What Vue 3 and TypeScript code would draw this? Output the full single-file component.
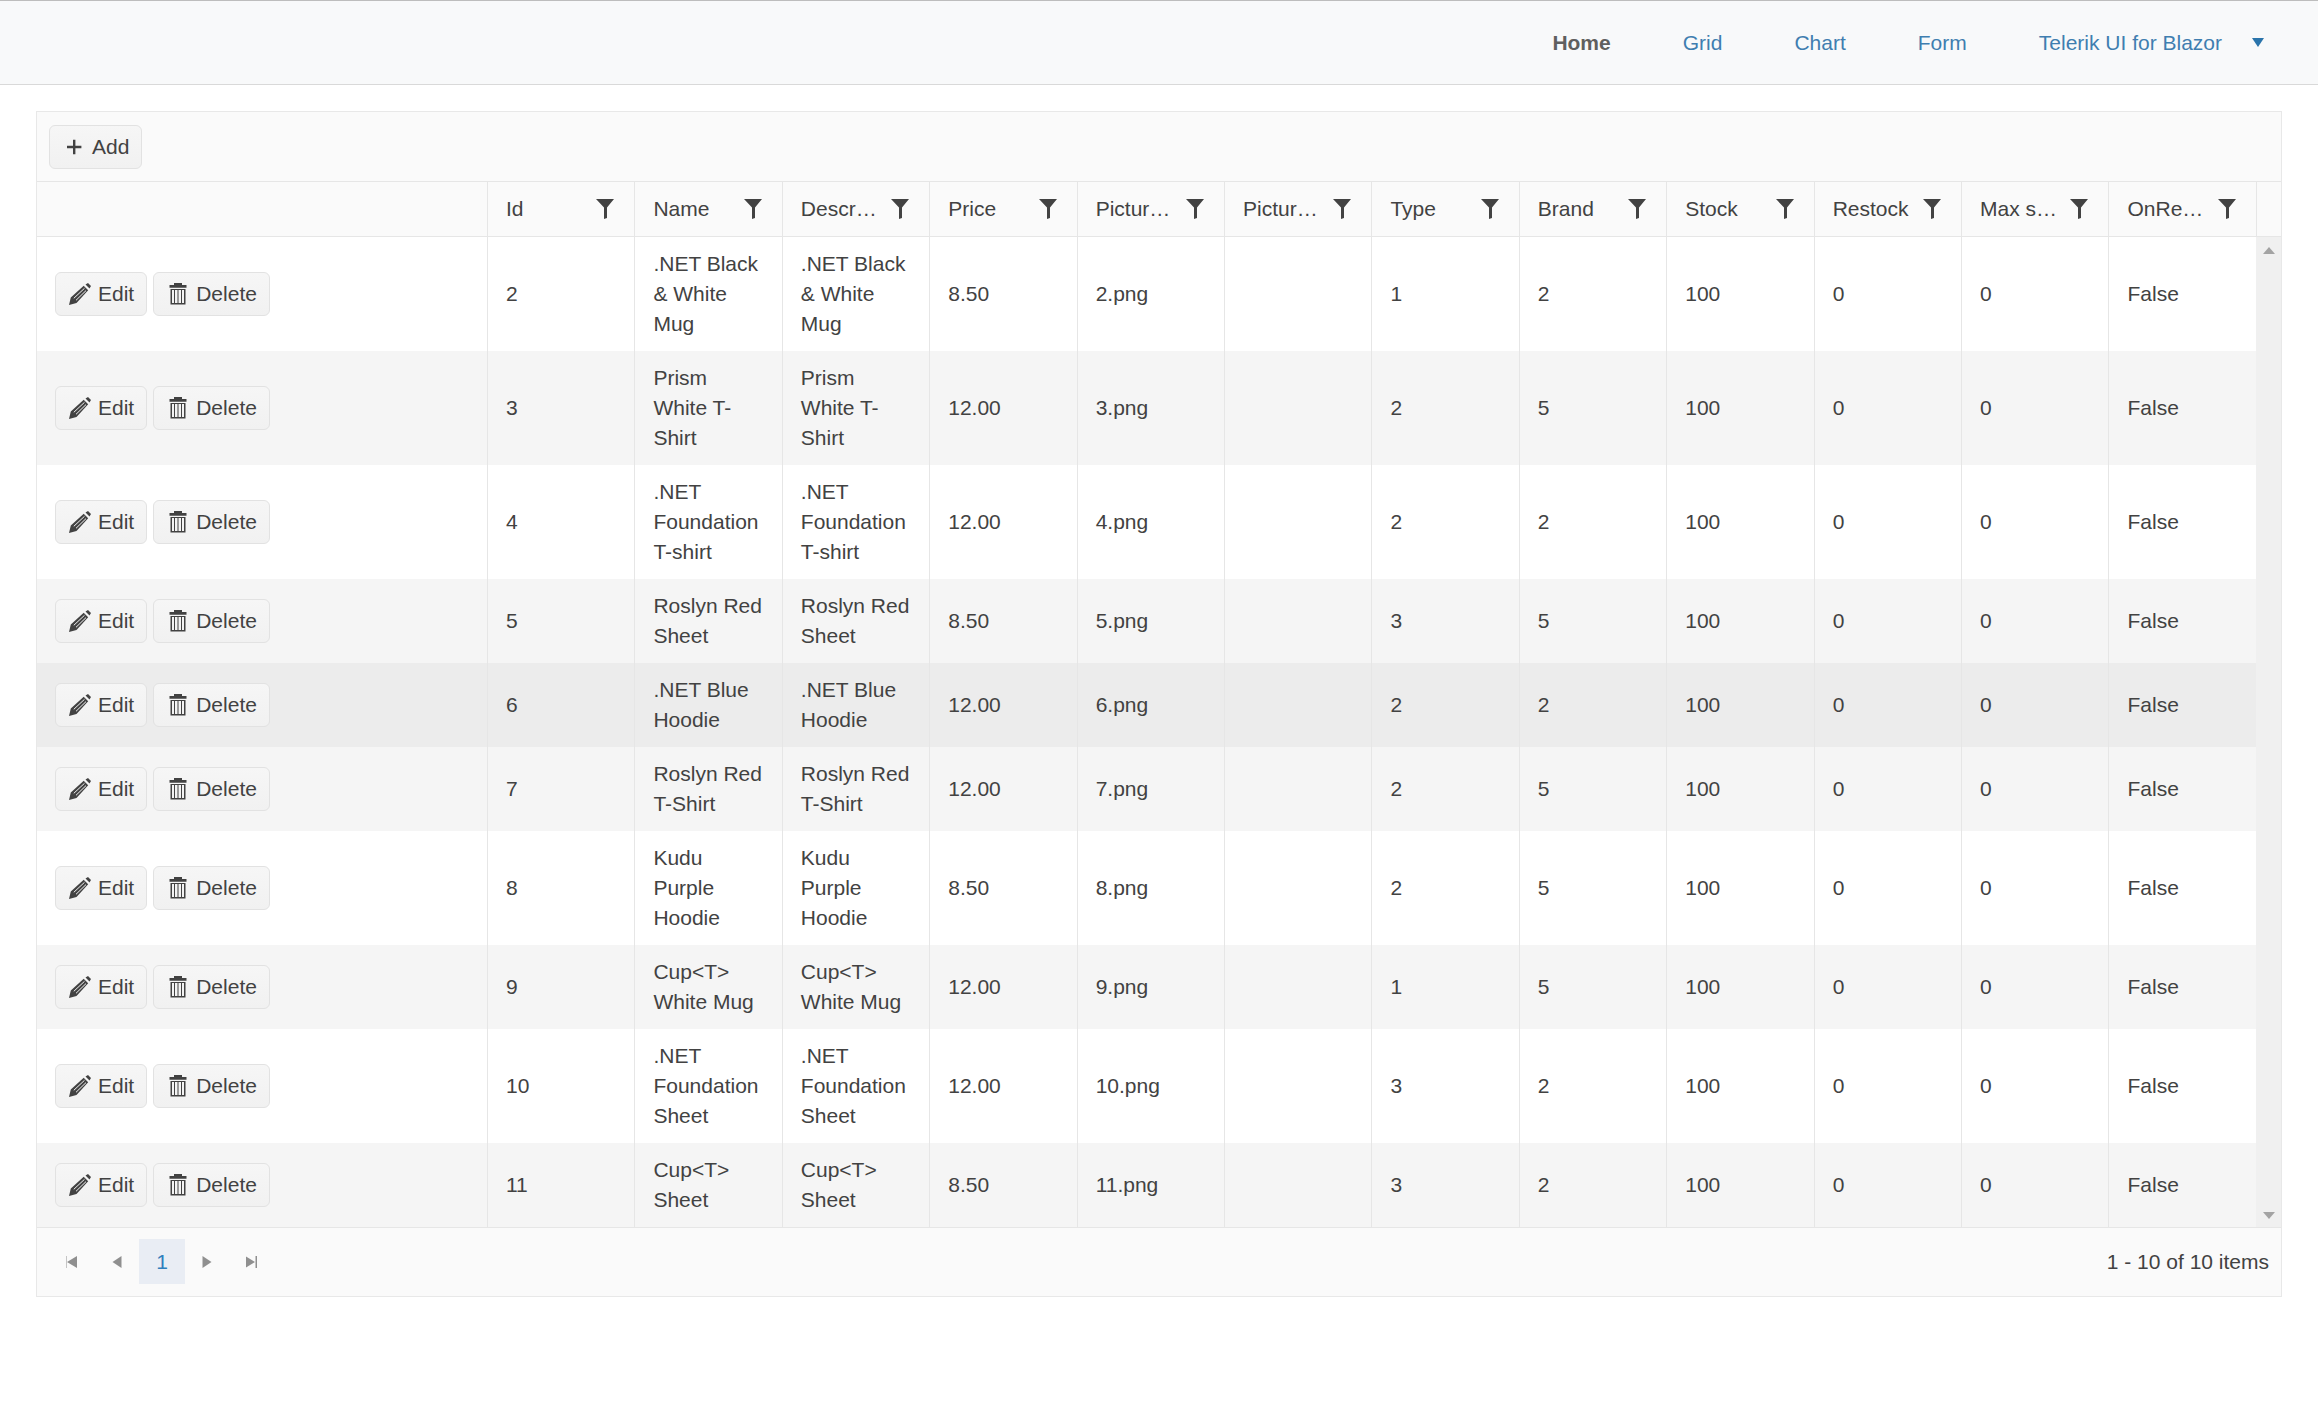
<template>
  <div class="page">
    <nav class="navbar">
      <a class="nav-link active">Home</a>
      <a class="nav-link">Grid</a>
      <a class="nav-link">Chart</a>
      <a class="nav-link">Form</a>
      <a class="nav-link dropdown">
        Telerik UI for Blazor
        <svg class="caret" viewBox="0 0 12 9"><path d="M0 0h12L6 9z" /></svg>
      </a>
    </nav>

    <main class="content">
      <div class="grid">
        <div class="toolbar">
          <button class="btn">
            <span class="btn-icon">
              <svg viewBox="0 0 24 24"><path d="M5 10.800h6v-6h2.400v6h6v2.400h-6v6H11v-6H5z" /></svg>
            </span>Add
          </button>
        </div>

        <div class="grid-head">
          <table class="grid-table">
            <colgroup>
              <col class="col-actions" />
            </colgroup>
            <thead>
              <tr>
                <th></th>
                <th v-for="title in columns" :key="title">
                  <span class="th-title">{{ title }}</span>
                  <svg class="filter" viewBox="0 0 18 20"><path d="M0 0h18l-7 8.500V19l-3 1V8.500z" /></svg>
                </th>
              </tr>
            </thead>
          </table>
          <div class="head-gutter"></div>
        </div>

        <div class="grid-body">
          <table class="grid-table">
            <colgroup>
              <col class="col-actions" />
            </colgroup>
            <tbody>
              <tr v-for="(row, i) in rows" :key="row.id" :class="{ alt: i % 2 === 1, hover: row.id === 6 }">
                <td>
                  <button class="btn">
                    <span class="btn-icon">
                      <svg viewBox="0 0 24 24">
                        <path d="M17.500 2.500L20 1l3 3-1.500 2.500zM2.800 15.500L15.700 3.800l4.500 4.500L8.500 21 1 23z" />
                        <path class="cut" d="M5.800 16.300L16.500 6.300M8 18.300L18 8.600" />
                      </svg>
                    </span>Edit
                  </button>
                  <button class="btn">
                    <span class="btn-icon">
                      <svg viewBox="0 0 24 24">
                        <path d="M8 1h8v2h4.500v2.700h-17V3H8z" />
                        <path d="M4.500 7h15v15.500h-15zM6 8v13h2V8zM9 8v13h2.500V8zM12.500 8v13H15V8zM16 8v13h2V8z" fill-rule="evenodd" />
                      </svg>
                    </span>Delete
                  </button>
                </td>
                <td>{{ row.id }}</td>
                <td>{{ row.name }}</td>
                <td>{{ row.name }}</td>
                <td>{{ row.price }}</td>
                <td>{{ row.id }}.png</td>
                <td></td>
                <td>{{ row.type }}</td>
                <td>{{ row.brand }}</td>
                <td>100</td>
                <td>0</td>
                <td>0</td>
                <td>False</td>
              </tr>
            </tbody>
          </table>
          <div class="scrollbar">
            <svg viewBox="0 0 12 7"><path d="M6 0l6 7H0z" /></svg>
            <svg viewBox="0 0 12 7"><path d="M0 0h12L6 7z" /></svg>
          </div>
        </div>

        <div class="pager">
          <a class="page-btn">
            <svg viewBox="1 0 12 12"><path d="M0 0h1.500v12H0zM12 0v12L2 6z" /></svg>
          </a>
          <a class="page-btn">
            <svg viewBox="0 0 12 12"><path d="M10.500 0v12L1.500 6z" /></svg>
          </a>
          <span class="page-btn selected">1</span>
          <a class="page-btn">
            <svg viewBox="0 0 12 12"><path d="M1.500 0v12l9-6z" /></svg>
          </a>
          <a class="page-btn">
            <svg viewBox="1 0 12 12"><path d="M12 0h-1.500v12H12zM0 0v12l10-6z" /></svg>
          </a>
          <span class="pager-info">1 - 10 of 10 items</span>
        </div>
      </div>
    </main>
  </div>
</template>

<script setup lang="ts">
interface Item {
  id: number;
  name: string;
  price: string;
  type: number;
  brand: number;
}

const columns: string[] = [
  'Id',
  'Name',
  'Description',
  'Price',
  'PictureFileName',
  'PictureUri',
  'Type',
  'Brand',
  'Stock',
  'Restock',
  'Max stock',
  'OnReorder',
];

const rows: Item[] = [
  { id: 2, name: '.NET Black & White Mug', price: '8.50', type: 1, brand: 2 },
  { id: 3, name: 'Prism White T-Shirt', price: '12.00', type: 2, brand: 5 },
  { id: 4, name: '.NET Foundation T-shirt', price: '12.00', type: 2, brand: 2 },
  { id: 5, name: 'Roslyn Red Sheet', price: '8.50', type: 3, brand: 5 },
  { id: 6, name: '.NET Blue Hoodie', price: '12.00', type: 2, brand: 2 },
  { id: 7, name: 'Roslyn Red T-Shirt', price: '12.00', type: 2, brand: 5 },
  { id: 8, name: 'Kudu Purple Hoodie', price: '8.50', type: 2, brand: 5 },
  { id: 9, name: 'Cup<T> White Mug', price: '12.00', type: 1, brand: 5 },
  { id: 10, name: '.NET Foundation Sheet', price: '12.00', type: 3, brand: 2 },
  { id: 11, name: 'Cup<T> Sheet', price: '8.50', type: 3, brand: 2 },
];
</script>

<style>
body {
  background: #fff;
}
</style>

<style scoped>
.page {
  font-family: 'Liberation Sans', Arial, sans-serif;
  font-size: 21px;
  line-height: 30px;
  color: #424242;
}

.navbar {
  display: flex;
  justify-content: flex-end;
  align-items: center;
  height: 83px;
  padding-right: 54px;
  background: #f8f9fa;
  border-top: 1px solid #bdbdbd;
  border-bottom: 1px solid #d9d9d9;
}

.nav-link {
  padding: 0 36px;
  color: #3f7eb0;
}

.nav-link.active {
  font-weight: 700;
  color: #5f5f5f;
}

.nav-link.dropdown {
  padding-right: 0;
  display: flex;
  align-items: center;
}

.caret {
  width: 12px;
  height: 9px;
  margin-left: 30px;
  fill: #2a74ab;
}

.content {
  padding: 26px 36px;
}

.grid {
  border: 1px solid #e8e8e8;
  background: #fafafa;
}

.toolbar {
  padding: 13px 12px 12px;
  border-bottom: 1px solid #e6e6e6;
}

.btn {
  display: inline-flex;
  align-items: center;
  height: 44px;
  padding: 0 12px;
  border: 1px solid #e2e2e2;
  border-radius: 6px;
  background: linear-gradient(#f6f6f6, #f1f1f1);
  font: inherit;
  color: #424242;
}

.btn + .btn {
  margin-left: 6px;
}

.btn-icon {
  width: 24px;
  height: 24px;
  margin-right: 6px;
}

.btn-icon svg {
  display: block;
  width: 24px;
  height: 24px;
  fill: #424242;
}

.cut {
  stroke: #f3f3f3;
  stroke-width: 1;
  fill: none;
}

.grid-head,
.grid-body {
  display: grid;
  grid-template-columns: minmax(0, 1fr) 25px;
}

.grid-head {
  border-bottom: 1px solid #e6e6e6;
}

.head-gutter {
  border-left: 1px solid #e6e6e6;
}

.grid-table {
  width: 100%;
  table-layout: fixed;
  border-collapse: separate;
  border-spacing: 0;
}

.col-actions {
  width: 450px;
}

th,
td {
  padding: 12px 18px;
  border-left: 1px solid #e6e6e6;
  text-align: left;
  font-weight: 400;
  vertical-align: middle;
}

th:first-child,
td:first-child {
  border-left: 0;
}

th {
  position: relative;
}

.th-title {
  display: block;
  width: 78px;
  overflow: hidden;
  white-space: nowrap;
  text-overflow: ellipsis;
}

.filter {
  position: absolute;
  top: 17px;
  right: 20px;
  width: 18px;
  height: 20px;
  fill: #424242;
}

td {
  background: #fff;
}

tr.alt td {
  background: #f5f5f5;
}

tr.hover td {
  background: #ececec;
}

.scrollbar {
  display: flex;
  flex-direction: column;
  justify-content: space-between;
  align-items: center;
  padding: 10px 0 8px;
  background: #f0f0f0;
}

.scrollbar svg {
  width: 12px;
  height: 7px;
  fill: #a3a3a3;
}

.pager {
  display: flex;
  align-items: center;
  padding: 11px 12px 12px 12px;
  border-top: 1px solid #e6e6e6;
}

.page-btn {
  display: flex;
  align-items: center;
  justify-content: center;
  width: 46px;
  height: 45px;
  margin-right: -1px;
}

.page-btn svg {
  width: 12px;
  height: 12px;
  fill: #8f8f8f;
}

.page-btn.selected {
  background: #e9edf4;
  color: #2f7fbd;
}

.pager-info {
  margin-left: auto;
}
</style>
